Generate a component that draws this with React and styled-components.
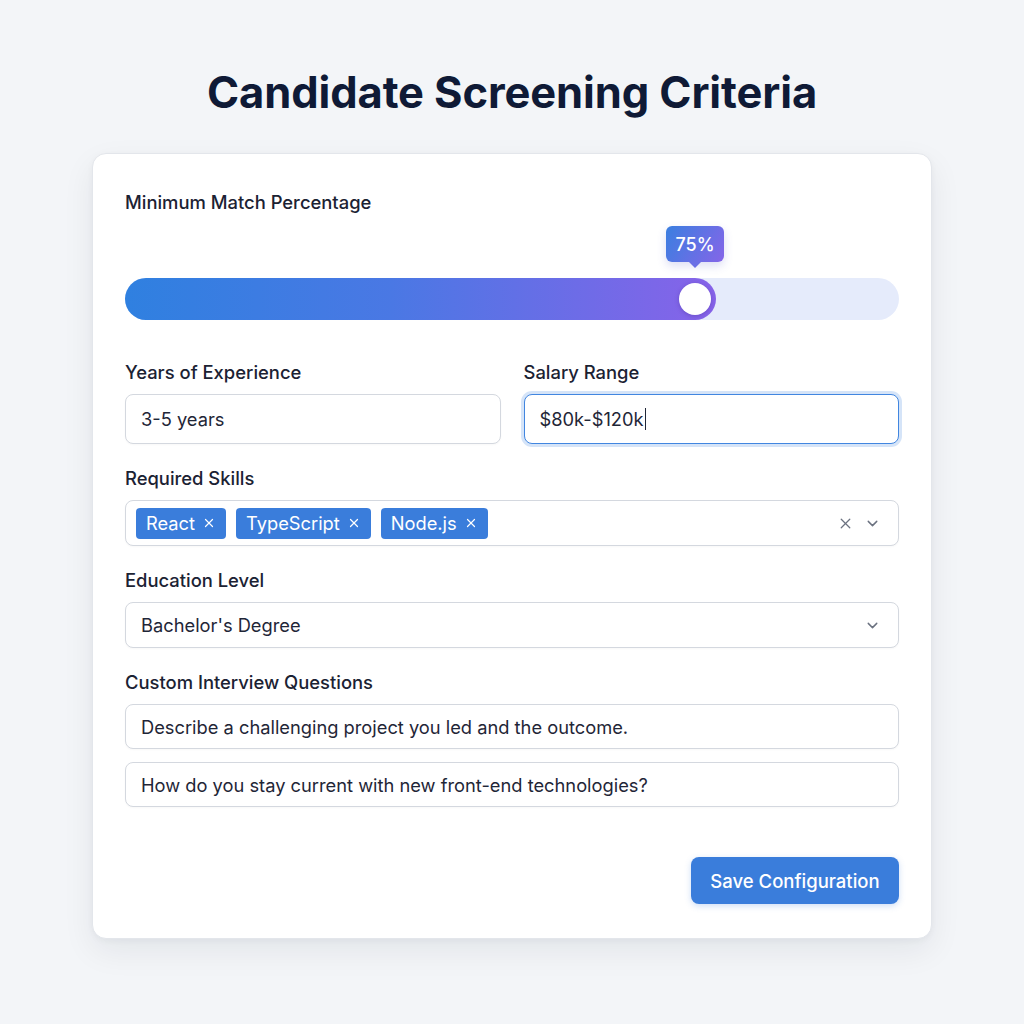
import React from "react";
import styled, { createGlobalStyle } from "styled-components";
import { X, ChevronDown } from "lucide-react";

const Global = createGlobalStyle`
  * { box-sizing: border-box; }
  html, body { margin: 0; padding: 0; }
  body {
    background: #f3f5f8;
    font-family: Inter, "Noto Sans", "Liberation Sans", sans-serif;
    color: #1b2233;
  }
`;

const Page = styled.div`
  min-height: 1024px;
  padding-top: 67px;
  display: flex;
  flex-direction: column;
  align-items: center;
`;

const Title = styled.h1`
  margin: 0 0 35px;
  font-size: 43.5px;
  line-height: 51px;
  font-weight: 700;
  color: #0f1a36;
  letter-spacing: -0.1px;
`;

const Card = styled.div`
  width: 840px;
  background: #fff;
  border: 1px solid #e3e6eb;
  border-radius: 14px;
  box-shadow: 0 12px 32px rgba(15, 23, 42, 0.07), 0 2px 6px rgba(15, 23, 42, 0.04);
  padding: 37px 32px 34px;
  display: flex;
  flex-direction: column;
`;

const Label = styled.div`
  font-size: 18.4px;
  line-height: 22px;
  font-weight: 500;
  color: #1b2233;
  margin-bottom: 11px;
`;

const Section = styled.div`
  margin-top: 23px;
`;

const SliderWrap = styled.div`
  margin-top: 54px;
`;

const Track = styled.div`
  position: relative;
  height: 42px;
  border-radius: 21px;
  background: #e5ebfb;
`;

const Fill = styled.div`
  height: 100%;
  border-radius: 21px;
  background: linear-gradient(90deg, #2f80e0 0%, #4a78e4 45%, #8763e9 100%);
`;

const Thumb = styled.div`
  position: absolute;
  top: 50%;
  width: 32px;
  height: 32px;
  border-radius: 50%;
  background: #fff;
  transform: translate(-50%, -50%);
  box-shadow: 0 1px 4px rgba(60, 40, 140, 0.35);
`;

const Tip = styled.div`
  position: absolute;
  bottom: calc(100% + 16px);
  transform: translateX(-50%);
  width: 58px;
  height: 36px;
  border-radius: 6px;
  background: linear-gradient(120deg, #3a7fe0 0%, #8565e8 100%);
  color: #fff;
  font-size: 18px;
  font-weight: 500;
  display: flex;
  align-items: center;
  justify-content: center;
  box-shadow: 0 4px 10px rgba(80, 90, 200, 0.2);
  &::after {
    content: "";
    position: absolute;
    left: 50%;
    top: 100%;
    transform: translateX(-50%);
    border-left: 6px solid transparent;
    border-right: 6px solid transparent;
    border-top: 6px solid #6a6fe5;
  }
`;

const TwoCol = styled.div`
  margin-top: 41px;
  display: grid;
  grid-template-columns: 1fr 1fr;
  gap: 23px;
`;

const Field = styled.div`
  height: ${(p) => p.$h || 46}px;
  border-radius: 8px;
  border: ${(p) => (p.$focus ? "1.5px solid #4186e0" : "1px solid #d4d8df")};
  box-shadow: ${(p) => (p.$focus ? "0 0 0 3px rgba(66, 134, 224, 0.22)" : "0 1px 2px rgba(15,23,42,0.03)")};
  background: #fff;
  display: flex;
  align-items: center;
  padding: 0 ${(p) => (p.$pr != null ? p.$pr : 15)}px 0 ${(p) => (p.$pl != null ? p.$pl : 15)}px;
  font-size: 18.3px;
  color: #1f2637;
  gap: ${(p) => p.$gap || 0}px;
`;

const Caret = styled.span`
  display: inline-block;
  width: 1px;
  height: 22px;
  background: #1f2637;
  margin-left: 1px;
`;

const Chip = styled.div`
  height: 31px;
  padding: 0 10px;
  border-radius: 4px;
  background: #3a7ddb;
  color: #fff;
  font-size: 18.3px;
  display: flex;
  align-items: center;
  gap: 7px;
`;

const Spacer = styled.div`
  flex: 1;
`;

const IconBtn = styled.span`
  display: flex;
  align-items: center;
  color: #6b7280;
`;

const QList = styled.div`
  display: flex;
  flex-direction: column;
  gap: 13px;
`;

const Footer = styled.div`
  margin-top: 50px;
  display: flex;
  justify-content: flex-end;
`;

const Button = styled.button`
  width: 208px;
  height: 47px;
  border: none;
  border-radius: 8px;
  background: #3a7ddb;
  color: #fff;
  font-family: inherit;
  font-size: 18.5px;
  font-weight: 500;
  cursor: pointer;
  box-shadow: 0 2px 6px rgba(58, 125, 219, 0.25);
`;

const skills = ["React", "TypeScript", "Node.js"];
const questions = [
  "Describe a challenging project you led and the outcome.",
  "How do you stay current with new front-end technologies?",
];

export default function App() {
  const value = 75;
  const f = value / 100;
  const pos = `calc(21px + (100% - 42px) * ${f})`;
  return (
    <>
      <Global />
      <Page>
        <Title>Candidate Screening Criteria</Title>
        <Card>
          <Label>Minimum Match Percentage</Label>
          <SliderWrap>
            <Track>
              <Fill style={{ width: `calc(42px + (100% - 42px) * ${f})` }} />
              <Thumb style={{ left: pos }} />
              <Tip style={{ left: pos }}>{value}%</Tip>
            </Track>
          </SliderWrap>

          <TwoCol>
            <div>
              <Label>Years of Experience</Label>
              <Field $h={50}>3-5 years</Field>
            </div>
            <div>
              <Label>Salary Range</Label>
              <Field $h={50} $focus>
                $80k-$120k
                <Caret />
              </Field>
            </div>
          </TwoCol>

          <Section>
            <Label>Required Skills</Label>
            <Field $pl={10} $pr={17} $gap={10}>
              {skills.map((s) => (
                <Chip key={s}>
                  {s}
                  <X size={14} strokeWidth={2.1} />
                </Chip>
              ))}
              <Spacer />
              <IconBtn>
                <X size={17} strokeWidth={1.8} />
              </IconBtn>
              <IconBtn>
                <ChevronDown size={17} strokeWidth={2} />
              </IconBtn>
            </Field>
          </Section>

          <Section>
            <Label>Education Level</Label>
            <Field $pr={17}>
              Bachelor's Degree
              <Spacer />
              <IconBtn>
                <ChevronDown size={17} strokeWidth={2} />
              </IconBtn>
            </Field>
          </Section>

          <Section>
            <Label>Custom Interview Questions</Label>
            <QList>
              {questions.map((q) => (
                <Field key={q} $h={45}>
                  {q}
                </Field>
              ))}
            </QList>
          </Section>

          <Footer>
            <Button>Save Configuration</Button>
          </Footer>
        </Card>
      </Page>
    </>
  );
}
